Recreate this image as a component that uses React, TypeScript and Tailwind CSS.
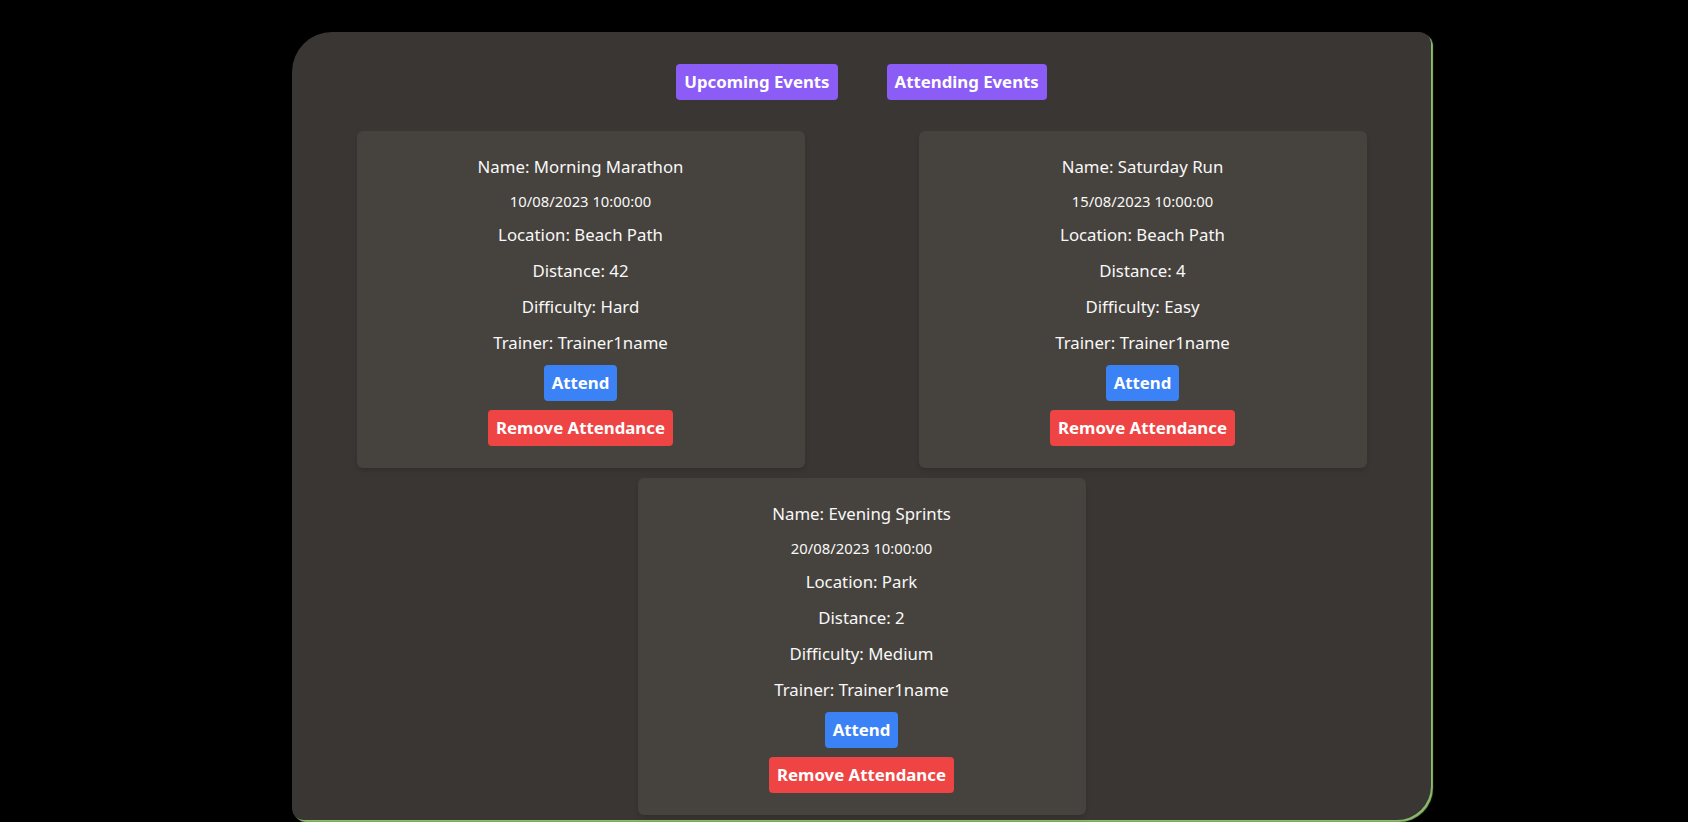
type RunEvent = {
  name: string;
  date: string;
  location: string;
  distance: number;
  difficulty: string;
  trainer: string;
};

const events: RunEvent[] = [
  { name: "Morning Marathon", date: "10/08/2023 10:00:00", location: "Beach Path", distance: 42, difficulty: "Hard", trainer: "Trainer1name" },
  { name: "Saturday Run", date: "15/08/2023 10:00:00", location: "Beach Path", distance: 4, difficulty: "Easy", trainer: "Trainer1name" },
  { name: "Evening Sprints", date: "20/08/2023 10:00:00", location: "Park", distance: 2, difficulty: "Medium", trainer: "Trainer1name" },
];

function EventCard({ ev }: { ev: RunEvent }) {
  return (
    <div className="w-[448px] bg-[#46423d] rounded-md shadow-md pt-6 pb-[22px] flex flex-col items-center text-center">
      <div className="flex flex-col items-center gap-3">
        <p className="text-[16.8px] leading-6">Name: {ev.name}</p>
        <p className="text-[14.8px] leading-5">{ev.date}</p>
        <p className="text-[16.8px] leading-6">Location: {ev.location}</p>
        <p className="text-[16.8px] leading-6">Distance: {ev.distance}</p>
        <p className="text-[16.8px] leading-6">Difficulty: {ev.difficulty}</p>
        <p className="text-[16.8px] leading-6">Trainer: {ev.trainer}</p>
      </div>
      <div className="flex flex-col items-center gap-[9px] mt-[10px]">
        <button className="bg-[#3b82f6] text-white text-[16.8px] font-bold px-2 py-1.5 rounded leading-6">Attend</button>
        <button className="bg-[#ef4444] text-white text-[16.8px] font-bold px-2 py-1.5 rounded leading-6">Remove Attendance</button>
      </div>
    </div>
  );
}

export default function App() {
  return (
    <div className="min-h-screen bg-black pt-8 pl-[292px] text-[#f8f8f8] font-['Noto_Sans',sans-serif]">
      <div className="w-[1139px] bg-[#3a3634] rounded-tl-[40px] rounded-tr-xl rounded-br-[34px] rounded-bl-xl shadow-[2px_2px_1px_#8dbb6c] pt-8 pb-[5px]">
        <div className="flex justify-center gap-[49px]">
          <button className="bg-[#8b5cf6] text-white text-[16.8px] font-bold px-2 py-1.5 rounded leading-6">Upcoming Events</button>
          <button className="bg-[#8b5cf6] text-white text-[16.8px] font-bold px-2 py-1.5 rounded leading-6">Attending Events</button>
        </div>
        <div className="flex flex-wrap justify-center gap-x-[114px] gap-y-[10px] mt-[31px]">
          {events.map((ev) => (
            <EventCard key={ev.name} ev={ev} />
          ))}
        </div>
      </div>
    </div>
  );
}
